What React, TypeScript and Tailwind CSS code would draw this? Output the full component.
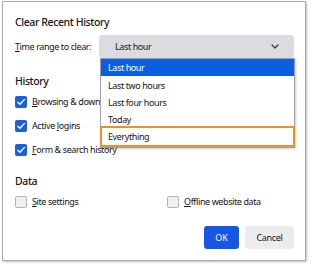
import React from "react";

const font = { fontFamily: '"Noto Sans", "Segoe UI", sans-serif' };

function Check({ checked }: { checked: boolean }) {
  if (checked) {
    return (
      <span className="flex h-[12px] w-[12px] shrink-0 items-center justify-center rounded-[2px] bg-[#1b5fe0]">
        <svg width="10" height="10" viewBox="0 0 10 10" fill="none">
          <path d="M1.8 5.2 L4 7.3 L8.3 2.6" stroke="white" strokeWidth="1.4" strokeLinecap="round" strokeLinejoin="round" />
        </svg>
      </span>
    );
  }
  return <span className="h-[12px] w-[12px] shrink-0 rounded-[2px] border border-[#b4b4b8] bg-[#f0f0f2]" />;
}

function Row({ checked, children }: { checked: boolean; children: React.ReactNode }) {
  return (
    <div className="flex h-[24px] items-center gap-[5px]">
      <Check checked={checked} />
      <span className="whitespace-nowrap text-[9px] tracking-[-0.4px] text-[#15141a]">{children}</span>
    </div>
  );
}

const item = "flex h-[17px] items-center whitespace-nowrap pl-[7px] text-[9px] tracking-[-0.4px] text-[#15141a]";

export default function App() {
  return (
    <div className="relative h-[266px] w-[314px] overflow-hidden bg-white" style={font}>
      <div className="ml-[2px] mt-[1px] h-[260px] w-[304px] border border-[#a9a9ad] bg-white pl-[12px] pr-[11px] pt-[13px] shadow-[1px_1px_2px_rgba(0,0,0,0.25)]">
        <div className="flex h-[16px] items-center whitespace-nowrap text-[10.5px] font-medium tracking-[-0.4px] text-[#15141a]">Clear Recent History</div>
        <div className="mt-[4px] flex h-[23px] items-center">
          <span className="w-[84px] shrink-0 whitespace-nowrap text-[9px] tracking-[-0.4px] text-[#15141a]">
            <span className="underline">T</span>ime range to clear:
          </span>
          <div className="flex h-[23px] flex-1 items-center justify-between rounded-[3px] bg-[#dcdce0] pl-[16px] pr-[15px]">
            <span className="whitespace-nowrap text-[9px] tracking-[-0.4px] text-[#15141a]">Last hour</span>
            <svg width="8" height="5" viewBox="0 0 8 5" fill="none">
              <path d="M1 1 L4 4 L7 1" stroke="#3a3a40" strokeWidth="1.2" strokeLinecap="round" strokeLinejoin="round" />
            </svg>
          </div>
        </div>
        <div className="mt-[16px] flex h-[16px] items-center text-[10.5px] font-medium tracking-[-0.4px] text-[#15141a]">History</div>
        <Row checked>
          <span className="underline">B</span>rowsing &amp; download history
        </Row>
        <Row checked>
          Active <span className="underline">l</span>ogins
        </Row>
        <Row checked>
          <span className="underline">F</span>orm &amp; search history
        </Row>
        <div className="mt-[12px] flex h-[16px] items-center text-[10.5px] font-medium tracking-[-0.4px] text-[#15141a]">Data</div>
        <div className="flex">
          <div className="w-[152px]">
            <Row checked={false}>
              <span className="underline">S</span>ite settings
            </Row>
          </div>
          <Row checked={false}>
            <span className="underline">O</span>ffline website data
          </Row>
        </div>
        <div className="mt-[12px] flex justify-end gap-[6px]">
          <button className="flex h-[23px] w-[35px] items-center justify-center rounded-[3px] bg-[#1656e6] text-[9px] text-white">OK</button>
          <button className="flex h-[23px] w-[49px] items-center justify-center rounded-[3px] bg-[#ececef] text-[9px] tracking-[-0.3px] text-[#15141a]">Cancel</button>
        </div>
      </div>

      <div className="absolute left-[100px] top-[58px] w-[195px] border border-[#a0a0a4] bg-white pb-[2px] shadow-[1px_1px_2px_rgba(0,0,0,0.2)]">
        <div className="flex h-[17px] items-center bg-[#0a5fe0] pl-[7px] text-[9px] tracking-[-0.4px] text-white">Last hour</div>
        <div className={`${item} mt-[1px]`}>Last two hours</div>
        <div className={item}>Last four hours</div>
        <div className={item}>Today</div>
        <div className={item}>Everything</div>
      </div>
      <div className="absolute left-[100px] top-[126px] h-[21px] w-[195px] border-2 border-[#e8922a]" />
    </div>
  );
}
